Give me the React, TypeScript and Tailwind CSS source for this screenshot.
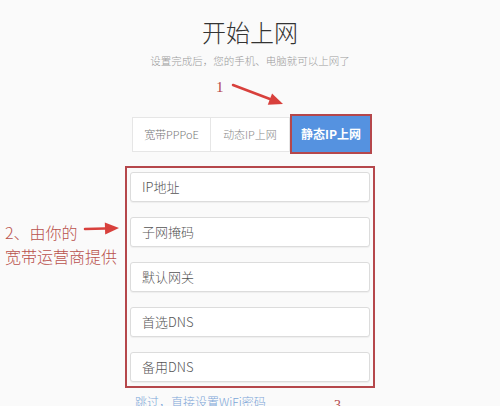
import React from 'react'

const fields = ['IP地址', '子网掩码', '默认网关', '首选DNS', '备用DNS']

function Arrow({ className, x1, y1, x2, y2 }: { className: string; x1: number; y1: number; x2: number; y2: number }) {
  const ang = Math.atan2(y2 - y1, x2 - x1)
  const len = 14
  const w = 6
  const bx = x2 - Math.cos(ang) * len
  const by = y2 - Math.sin(ang) * len
  const px = -Math.sin(ang) * w
  const py = Math.cos(ang) * w
  return (
    <svg className={className} width="500" height="406" viewBox="0 0 500 406">
      <path d={`M${x1} ${y1} L${bx} ${by}`} stroke="#d8403c" strokeWidth="2.5" strokeLinecap="round" />
      <polygon points={`${x2},${y2} ${bx + px},${by + py} ${bx - px},${by - py}`} fill="#d8403c" />
    </svg>
  )
}

export default function App() {
  return (
    <div className="relative w-[500px] h-[406px] overflow-hidden bg-[#fafafa] font-['Noto_Sans_CJK_SC','Noto_Sans',sans-serif]">
      <div className="flex flex-col items-center">
        <h1 className="pt-[17px] text-[24px] leading-[30px] font-light text-[#333]">开始上网</h1>
        <p className="mt-[7px] text-[10.5px] leading-[14px] font-light text-[#9a9a9a]">设置完成后，您的手机、电脑就可以上网了</p>

        <div className="mt-[46px] ml-[4px] flex items-center">
          <div className="w-[79px] h-[35px] flex items-center justify-center bg-white border border-[#e6e6e6] text-[11px] font-light text-[#777]">宽带PPPoE</div>
          <div className="w-[79px] h-[35px] flex items-center justify-center bg-white border border-l-0 border-[#e6e6e6] text-[11px] font-light text-[#888]">动态IP上网</div>
          <div className="w-[82px] h-[40px] flex items-center justify-center bg-[#5592e0] border-2 border-[#b5474b] text-[12px] font-bold text-white">静态IP上网</div>
        </div>

        <div className="mt-[12px] w-[250px] border-2 border-[#b5474b] px-[3px] py-[4px] flex flex-col gap-[15px]">
          {fields.map(f => (
            <div key={f} className="h-[30px] bg-white border border-[#dcdcdc] rounded-[3px] shadow-[0_1px_1px_rgba(0,0,0,0.05)] flex items-center px-[11px] text-[13px] font-light text-[#555]">
              {f}
            </div>
          ))}
        </div>

        <div className="w-[250px] mt-[6px] flex items-start">
          <span className="ml-[10px] text-[12px] leading-[16px] font-light text-[#7ca6d8]">跳过，直接设置WiFi密码</span>
          <span className="ml-auto mr-[34px] mt-[4px] text-[14px] leading-[16px] text-[#b5474b] font-['Liberation_Serif',serif]">3</span>
        </div>
      </div>

      <span className="absolute left-[216px] top-[79px] text-[15px] leading-[16px] text-[#b5474b] font-['Liberation_Serif',serif]">1</span>
      <Arrow className="absolute left-0 top-0 pointer-events-none" x1={233} y1={85} x2={283} y2={104} />

      <div className="absolute left-[5px] top-[220px] text-[16px] leading-[24px] font-light text-[#b9514c]">
        <div>2、由你的</div>
        <div>宽带运营商提供</div>
      </div>
      <Arrow className="absolute left-0 top-0 pointer-events-none" x1={85} y1={229} x2={119} y2={228} />
    </div>
  )
}
